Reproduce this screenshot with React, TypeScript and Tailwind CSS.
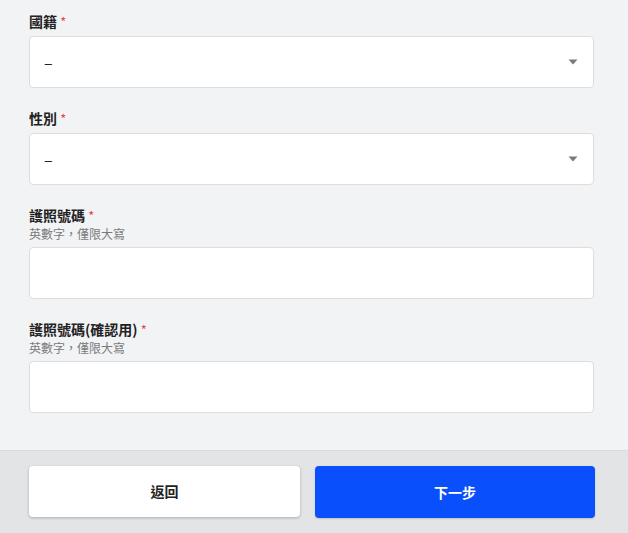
import React from 'react';

const Label = ({ text, hint }: { text: string; hint?: string }) => (
  <div>
    <div className="h-[20px] text-[14px] font-bold leading-[20px] text-[#222]">
      {text} <span className="text-[13px] font-normal leading-none text-[#e5484d]">*</span>
    </div>
    {hint && <div className="text-[12px] leading-[17px] text-[#7a7a7a]">{hint}</div>}
  </div>
);

const Select = () => (
  <div className="mt-[5px] flex h-[52px] items-center justify-between rounded-[4px] border border-[#dcdde0] bg-white pl-[14px] pr-[15px]">
    <span className="pb-[1px] text-[16px] leading-none text-[#222]">–</span>
    <svg width="10" height="6" viewBox="0 0 10 6">
      <path d="M0.5 0.5h9L5 5.5z" fill="#7b7b7b" />
    </svg>
  </div>
);

const Input = () => (
  <div className="mt-[5px] h-[52px] rounded-[4px] border border-[#dcdde0] bg-white" />
);

export default function App() {
  return (
    <div
      className="flex min-h-[533px] flex-col bg-[#f2f3f5]"
      style={{ fontFamily: '"Noto Sans CJK TC", "Noto Sans", sans-serif' }}
    >
      <div className="flex flex-col gap-[20px] pl-[29px] pr-[34px] pt-[11px] pb-[37px]">
        <div>
          <Label text="國籍" />
          <Select />
        </div>
        <div>
          <Label text="性別" />
          <Select />
        </div>
        <div>
          <Label text="護照號碼" hint="英數字，僅限大寫" />
          <Input />
        </div>
        <div>
          <Label text="護照號碼(確認用)" hint="英數字，僅限大寫" />
          <Input />
        </div>
      </div>
      <div className="flex flex-1 gap-[15px] border-t border-[#dadbdd] bg-[#e3e4e6] pl-[29px] pr-[33px] pt-[15px] pb-[16px]">
        <button className="h-[51px] flex-1 rounded-[4px] bg-white text-[14px] font-bold text-[#222] shadow-[0_1px_3px_rgba(0,0,0,0.25)]">
          返回
        </button>
        <button className="h-[52px] w-[280px] rounded-[4px] bg-[#0a4ffc] text-[14px] font-bold text-white shadow-[0_1px_2px_rgba(0,0,0,0.15)]">
          下一步
        </button>
      </div>
    </div>
  );
}
